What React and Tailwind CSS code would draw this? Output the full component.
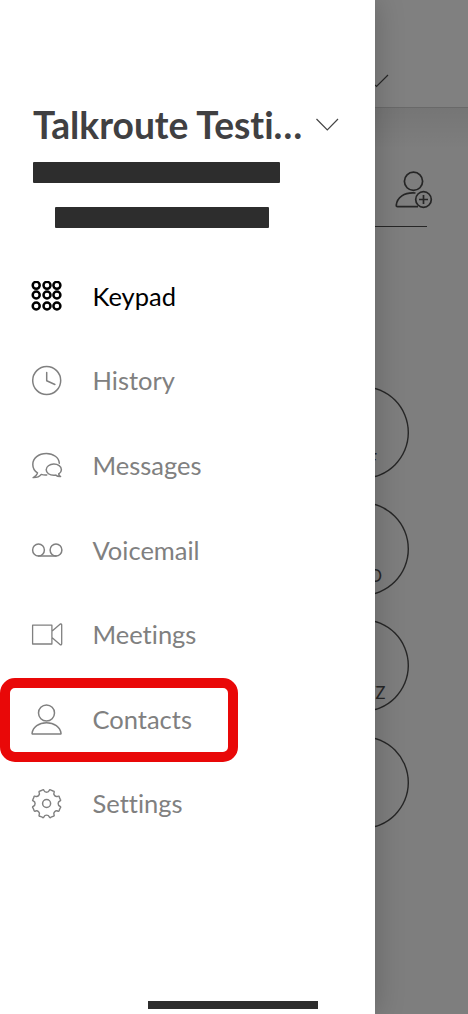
import clsx from 'clsx'

function Icon({ children, className }) {
  return (
    <svg
      viewBox="0 0 32 32"
      className={clsx('size-8 shrink-0', className)}
      fill="none"
      stroke="currentColor"
      strokeWidth="1.5"
      strokeLinecap="round"
      strokeLinejoin="round"
    >
      {children}
    </svg>
  )
}

function KeypadIcon() {
  return (
    <Icon>
      {[4.3, 14, 25].map((cy) =>
        [5.2, 16, 25.9].map((cx) => <circle key={`${cx}-${cy}`} cx={cx} cy={cy} r="3.5" strokeWidth="2.5" />)
      )}
    </Icon>
  )
}

function HistoryIcon() {
  return (
    <Icon>
      <circle cx="15.7" cy="15.5" r="14" />
      <path d="M15.7 7.5v8.3l8.2 3.7" />
    </Icon>
  )
}

function MessagesIcon() {
  return (
    <Icon>
      <path d="M28.3 13.200C27.900 7.600 22.500 3.500 15.400 3.500 7.600 3.500 1.800 8.300 1.800 14.400c0 3.400 1.700 6.500 4.700 8.500-.5 1.900-2 3.600-4.400 4.700 3.700.1 6.500-1 8.200-3.200 1.900.6 3.800.7 5.500.5" />
      <path d="M27.700 24c1.600-1 2.700-2.500 2.700-4.300 0-3.200-3.400-5.600-7.600-5.600s-7.600 2.500-7.600 5.700 3.400 5.500 7.600 5.500c.7 0 1.300-.1 2-.2 1 1 2.900 1.600 4.800 1.500-1-.5-1.600-1.300-1.900-2.600z" />
    </Icon>
  )
}

function VoicemailIcon() {
  return (
    <Icon>
      <circle cx="7.500" cy="15" r="5.900" />
      <circle cx="25" cy="15" r="5.900" />
      <path d="M7.500 20.900H25" />
    </Icon>
  )
}

function MeetingsIcon() {
  return (
    <Icon>
      <path
        d="M1.600 6.200h19.300v18.800H1.600zM20.900 12.300l8.400-7.300q1.400-.2 1.400 1v18.800q0 1.200-1.400 1l-8.400-7.300"
        strokeWidth="1.300"
      />
    </Icon>
  )
}

function ContactsIcon() {
  return (
    <Icon>
      <circle cx="15.500" cy="9" r="8" />
      <path d="M1.700 30c-.5 0-.7-.4-.6-.9C2 23.100 7.800 18.700 15.500 18.700s13.600 4.400 14.500 10.400c.1.500-.1.900-.6.900z" />
    </Icon>
  )
}

function SettingsIcon() {
  return (
    <Icon>
      <path
        transform="translate(.5 .1) scale(.963)"
        d="M11.200 2.100C12 1.200 12.700 1.700 13 2.600c.8 2.300 4.600 2.300 5.400 0 .3-.9 1-1.400 1.800-.5l2.200.9c1.200 0 1.400.8 1 1.700-1.100 2.200 1.600 4.800 3.800 3.800.9-.4 1.600-.2 1.700 1l.9 2.100c.9.800.5 1.500-.4 1.800-2.300.8-2.300 4.600 0 5.400.9.300 1.300 1 .4 1.800l-.9 2.200c0 1.200-.8 1.400-1.700 1-2.200-1.100-4.900 1.600-3.800 3.800.4.900.2 1.600-1 1.700l-2.200.9c-.8.900-1.500.5-1.800-.4-.8-2.300-4.600-2.300-5.400 0-.3.900-1 1.300-1.800.4L9 29.300c-1.200 0-1.400-.8-1-1.700 1.100-2.200-1.600-4.900-3.800-3.800-.9.400-1.600.2-1.700-1l-.9-2.200c-.9-.8-.5-1.500.4-1.800 2.300-.8 2.300-4.600 0-5.400-.9-.3-1.300-1-.4-1.800l.9-2.100c.1-1.200.8-1.400 1.700-1C6.400 9.500 9.100 6.900 8 4.700 7.600 3.800 7.800 3 9 3z"
      />
      <circle cx="15.600" cy="15.500" r="4" />
    </Icon>
  )
}

const MENU = [
  { label: 'Keypad', icon: KeypadIcon, active: true },
  { label: 'History', icon: HistoryIcon },
  { label: 'Messages', icon: MessagesIcon },
  { label: 'Voicemail', icon: VoicemailIcon },
  { label: 'Meetings', icon: MeetingsIcon },
  { label: 'Contacts', icon: ContactsIcon, marked: true },
  { label: 'Settings', icon: SettingsIcon },
]

function MenuRow({ item }) {
  const IconComponent = item.icon
  return (
    <li className="relative">
      <button
        className={clsx(
          'flex h-[84.6px] w-full items-center pl-[31px] text-left text-[25.5px]',
          item.active ? 'text-black' : 'text-[#808080]'
        )}
      >
        <IconComponent />
        <span className="ml-[29.500px] pb-[2px]">{item.label}</span>
      </button>
      {item.marked && (
        <div className="absolute top-0 left-0 h-[84px] w-[238px] rounded-[15px] border-10 border-[#e90808]" />
      )}
    </li>
  )
}

function Drawer() {
  return (
    <aside className="relative flex w-[374.6px] shrink-0 flex-col bg-white shadow-[0_0_28px_rgba(0,0,0,0.22)]">
      <header className="flex h-[162px] items-end pl-[33px] pb-[14px]">
        <h1 className="w-[268px] text-[37.2px] leading-[46px] font-bold whitespace-nowrap text-[#404042]">
          Talkroute Testi…
        </h1>
        <svg viewBox="0 0 24 14" className="mb-4 ml-[14px] h-[14px] w-6" fill="none" stroke="#444" strokeWidth="1.2">
          <path d="M1.500 1 12.300 12 23 1" />
        </svg>
      </header>

      {/* Account details, blanked out */}
      <div className="ml-[33px] h-[21px] w-[247px] rounded-[1px] bg-[#2d2d2d]" />
      <div className="mt-6 ml-[55px] h-[21px] w-[214px] rounded-[1px] bg-[#2d2d2d]" />

      <ul className="mt-[26.600px]">
        {MENU.map((item) => (
          <MenuRow key={item.label} item={item} />
        ))}
      </ul>

      <div className="mt-auto mb-[5px] ml-[148px] h-2 w-[170px] bg-[#2d2d2d]" />
    </aside>
  )
}

// The part of the dialer that stays visible next to the open drawer
function DialerBehind() {
  return (
    <main className="flex min-w-0 flex-1 flex-col overflow-hidden bg-[#7e7e7e] text-[#262626]">
      <div className="flex h-[108px] items-end border-b border-[#696969] bg-[#808080] pb-[19px]">
        <svg viewBox="0 0 14 14" className="size-[14px]" fill="none" stroke="currentColor" strokeWidth="1.200">
          <path d="M0 11 1.500 12.500 13 1" />
        </svg>
      </div>
      <div className="bg-linear-to-b from-black/7 to-transparent to-35%">
        <div className="flex h-[119px] w-[52px] flex-col justify-end border-b border-[#262626] pb-[17px] pl-5">
          <svg viewBox="0 0 38 38" className="size-[38px]" fill="none" stroke="currentColor" strokeWidth="1.700">
            <circle cx="18.500" cy="10.300" r="9.100" />
            <path d="M20.500 22C9 21 2 26.500 1.300 34.200q-.1 1.500 1.200 1.500H23" />
            <circle cx="28.500" cy="28.500" r="7.800" />
            <path d="M28.500 24v9M24 28.500h9" />
          </svg>
        </div>
      </div>
      <div className="-ml-[59.500px] mt-[158.500px] flex flex-col gap-[23.200px]">
        {['DEF', 'MNO', 'WXYZ', ''].map((letters) => (
          <div
            key={letters}
            className="flex size-[93.500px] items-end justify-center rounded-full pb-[7.500px] text-[16.500px] leading-6 shadow-[inset_0_0_0_1.400px_#262626]"
          >
            <span className="-ml-px">{letters}</span>
          </div>
        ))}
      </div>
    </main>
  )
}

export default function App() {
  return (
    <div className="flex h-[1014px] w-[468px] overflow-hidden font-['Lato',sans-serif] [font-variant-ligatures:none]">
      <Drawer />
      <DialerBehind />
    </div>
  )
}
